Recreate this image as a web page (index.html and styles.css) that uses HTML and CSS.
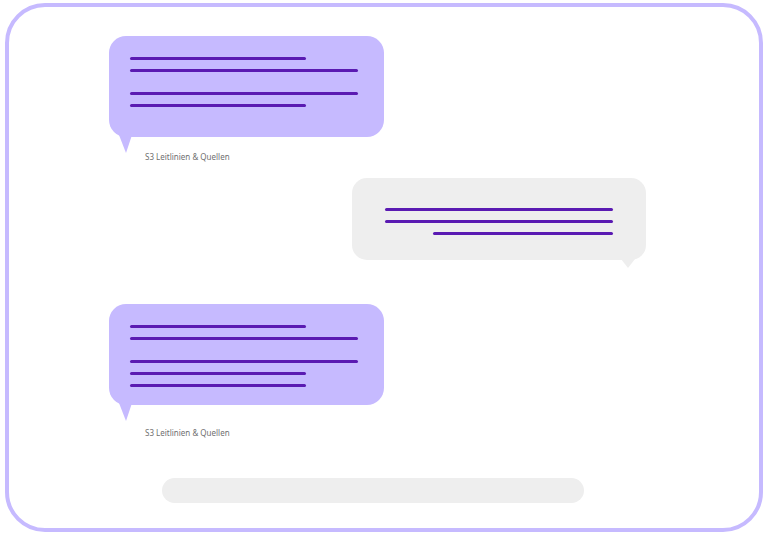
FILE: index.html
```html
<!DOCTYPE html>
<html lang="de">
  <head>
    <meta charset="UTF-8" />
    <meta name="viewport" content="width=device-width, initial-scale=1.0" />
    <title>Chat</title>
    <link rel="stylesheet" href="styles.css">
  </head>

  <body>
    <main class="frame">
      <!-- Answer -->
      <article class="message">
        <div class="bubble">
          <div class="line short"></div>
          <div class="line"></div>
          <div class="line paragraph"></div>
          <div class="line short"></div>
          <svg class="tail" viewBox="0 0 13 18" aria-hidden="true">
            <path d="M0 0 L13 0 L7 18 Z" />
          </svg>
        </div>
        <p class="source">S3 Leitlinien &amp; Quellen</p>
      </article>

      <!-- Question -->
      <article class="message question">
        <div class="bubble">
          <div class="line"></div>
          <div class="line"></div>
          <div class="line last"></div>
          <svg class="tail" viewBox="0 0 14 9" aria-hidden="true">
            <path d="M0 0 L14 0 L7 9 Z" />
          </svg>
        </div>
      </article>

      <!-- Answer -->
      <article class="message long">
        <div class="bubble">
          <div class="line short"></div>
          <div class="line"></div>
          <div class="line paragraph"></div>
          <div class="line short"></div>
          <div class="line short"></div>
          <svg class="tail" viewBox="0 0 13 18" aria-hidden="true">
            <path d="M0 0 L13 0 L7 18 Z" />
          </svg>
        </div>
        <p class="source">S3 Leitlinien &amp; Quellen</p>
      </article>

      <form class="prompt">
        <input class="prompt-input" type="text" aria-label="Nachricht" />
      </form>
    </main>
  </body>
</html>
```

FILE: styles.css
```css
* {
  box-sizing: border-box;
}

body {
  margin: 0;
  padding: 3px 2px 3px 5px;
  background-color: #fff;
  font-family: "Noto Sans", sans-serif;
}

/* Rounded frame around the chat */
.frame {
  display: flex;
  flex-direction: column;
  min-height: calc(100vh - 6px);
  padding: 29px 113px 25px 100px;
  border: 4px solid #c6baff;
  border-radius: 40px;
}

.message {
  width: 100%;
  max-width: 275px;
}

.bubble {
  position: relative;
  display: flex;
  flex-direction: column;
  gap: 9px;
  min-height: 101px;
  padding: 21px 26px 17px 21px;
  border-radius: 17px;
  background-color: #c6baff;
}

/* Text lines */
.line {
  height: 3px;
  border-radius: 2px;
  background-color: #5a1ab2;
}

.line.short {
  width: 77%;
}

.line.last {
  width: 79%;
  align-self: flex-end;
}

.line.paragraph {
  margin-top: 11px;
}

/* Tail of the bubble */
.tail {
  position: absolute;
  top: calc(100% - 2px);
  left: 10px;
  width: 13px;
  height: 18px;
  fill: #c6baff;
}

.source {
  margin: 15px 0 0 36px;
  color: #707070;
  font-size: 8px;
  line-height: 10px;
}

/* Question bubble on the right side */
.question {
  align-self: flex-end;
  max-width: 294px;
  margin-top: 16px;
}

.question .bubble {
  min-height: 82px;
  padding: 30px 33px 25px;
  border-radius: 15px;
  background-color: #eee;
}

.question .tail {
  top: calc(100% - 1px);
  right: 11px;
  left: auto;
  width: 14px;
  height: 9px;
  fill: #eee;
}

.long {
  margin-top: 44px;
}

.long .source {
  margin-top: 23px;
}

/* Input at the bottom */
.prompt {
  display: flex;
  max-width: 475px;
  margin-top: 40px;
  padding-left: 53px;
}

.prompt-input {
  flex: 1;
  min-width: 0;
  height: 25px;
  padding: 0 12px;
  border: none;
  border-radius: 13px;
  background-color: #eee;
  font-family: inherit;
  font-size: 8px;
}
```
